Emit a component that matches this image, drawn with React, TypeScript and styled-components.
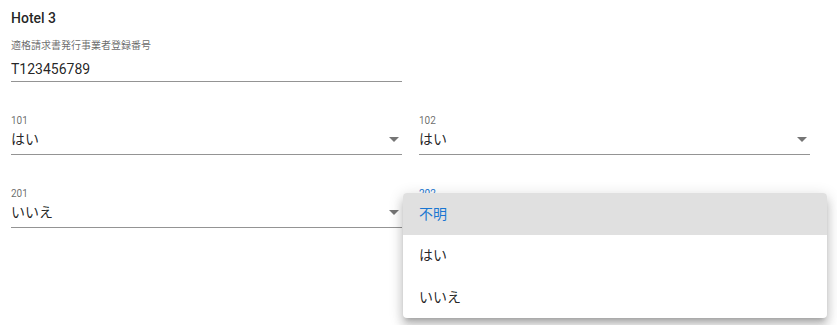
import * as React from 'react';
import styled, { createGlobalStyle } from 'styled-components';

const textPrimary = 'rgba(0, 0, 0, 0.87)';
const textSecondary = 'rgba(0, 0, 0, 0.6)';
const primary = '#1976d2';

const GlobalStyle = createGlobalStyle`
  html, body {
    margin: 0;
    padding: 0;
    background: #ffffff;
  }
  body {
    font-family: Roboto, "Noto Sans CJK JP", "Noto Sans", sans-serif;
    color: ${textPrimary};
  }
`;

const StyledPage = styled.div`
  width: 837px;
  height: 325px;
  box-sizing: border-box;
  padding: 8px 11px;
  overflow: hidden;
`;

const StyledTitle = styled.h2`
  margin: 0;
  font-size: 14px;
  line-height: 20px;
  font-weight: 500;
`;

const StyledForm = styled.div`
  display: flex;
  flex-direction: column;
  row-gap: 32px;
  margin-top: 11px;
`;

const StyledRow = styled.div`
  display: grid;
  grid-template-columns: 391px 391px;
  column-gap: 17px;
`;

const StyledField = styled.div`
  position: relative;
  display: flex;
  flex-direction: column;
`;

const StyledLabel = styled.label<{ $focused?: boolean }>`
  font-size: 10px;
  line-height: 14px;
  color: ${(p) => (p.$focused ? primary : textSecondary)};
`;

const StyledInput = styled.div<{ $select?: boolean }>`
  display: flex;
  align-items: center;
  justify-content: space-between;
  margin-top: ${(p) => (p.$select ? '0' : '5px')};
  padding-bottom: ${(p) => (p.$select ? '3px' : '0')};
  padding-right: 3px;
  font-size: 14px;
  line-height: 23px;
  color: ${textPrimary};
  border-bottom: 1px solid #949494;
`;

const StyledArrow = styled.svg`
  width: 10px;
  height: 5px;
  fill: rgba(0, 0, 0, 0.54);
  flex: none;
`;

// popover menu opened from the select, laid over the form
const StyledMenu = styled.ul`
  position: absolute;
  top: 6px;
  left: -16px;
  width: 424px;
  margin: 0;
  padding: 0;
  list-style: none;
  background: #ffffff;
  border-radius: 4px;
  overflow: hidden;
  z-index: 10;
  box-shadow: 0px 5px 5px -3px rgba(0, 0, 0, 0.2),
    0px 8px 10px 1px rgba(0, 0, 0, 0.14),
    0px 3px 14px 2px rgba(0, 0, 0, 0.12);
`;

const StyledMenuItem = styled.li<{ $selected?: boolean }>`
  display: flex;
  align-items: center;
  height: 41.67px;
  padding: 0 16px;
  font-size: 14px;
  line-height: 24px;
  color: ${(p) => (p.$selected ? primary : textPrimary)};
  background: ${(p) => (p.$selected ? '#e0e0e0' : 'transparent')};
`;

const ArrowDropDown = () => (
  <StyledArrow viewBox="0 0 10 5">
    <path d="M0 0l5 5 5-5z" />
  </StyledArrow>
);

interface ISelectProps {
  label: string;
  value: string;
  open?: boolean;
  options?: string[];
}

const options = ['不明', 'はい', 'いいえ'];

const SelectField = ({ label, value, open, options: opts = [] }: ISelectProps) => (
  <StyledField>
    <StyledLabel $focused={open}>{label}</StyledLabel>
    <StyledInput $select>
      <span>{value}</span>
      <ArrowDropDown />
    </StyledInput>
    {open && (
      <StyledMenu>
        {opts.map((o) => (
          <StyledMenuItem key={o} $selected={o === value}>
            {o}
          </StyledMenuItem>
        ))}
      </StyledMenu>
    )}
  </StyledField>
);

export default function App() {
  return (
    <>
      <GlobalStyle />
      <StyledPage>
        <StyledTitle>Hotel 3</StyledTitle>
        <StyledForm>
          <StyledRow>
            <StyledField>
              <StyledLabel>適格請求書発行事業者登録番号</StyledLabel>
              <StyledInput>
                <span>T123456789</span>
              </StyledInput>
            </StyledField>
          </StyledRow>
          <StyledRow>
            <SelectField label="101" value="はい" />
            <SelectField label="102" value="はい" />
          </StyledRow>
          <StyledRow>
            <SelectField label="201" value="いいえ" />
            <SelectField label="202" value="不明" open options={options} />
          </StyledRow>
        </StyledForm>
      </StyledPage>
    </>
  );
}
